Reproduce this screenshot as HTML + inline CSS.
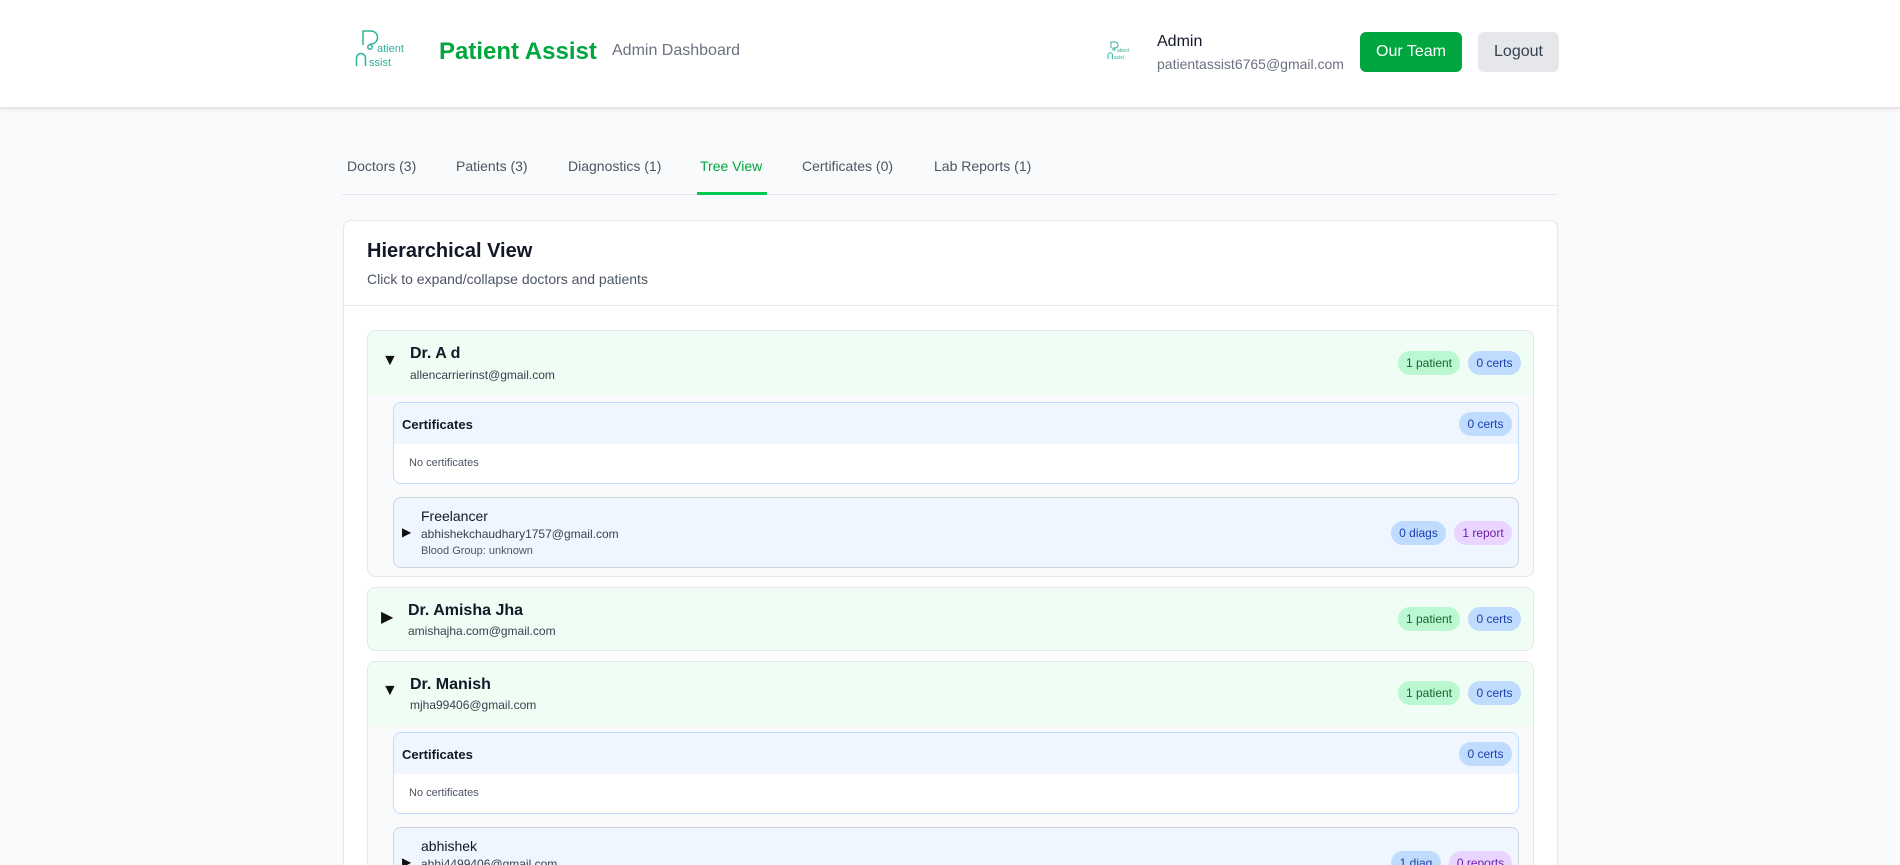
<!DOCTYPE html>
<html><head><meta charset="utf-8"><style>
*{box-sizing:border-box;margin:0;padding:0}
html,body{width:1900px;height:865px;overflow:hidden}
body{background:#f9fafb;font-family:"Liberation Sans",Arial,sans-serif;color:#111827}
#w{position:relative;width:1900px;height:865px;overflow:hidden}
.a{position:absolute;white-space:nowrap}
.hdr{position:absolute;left:0;top:0;width:1900px;height:108px;background:#fff;box-shadow:0 1px 3px rgba(0,0,0,.12);border-bottom:1px solid #e5e7eb}
.btn{position:absolute;border-radius:6px;font-size:16px;display:flex;align-items:center;justify-content:center}
.tab{position:absolute;top:158px;font-size:14px;color:#4b5563;white-space:nowrap}
.badge{position:absolute;height:24px;border-radius:12px;font-size:12px;display:flex;align-items:center;justify-content:center}
.g{background:#bbf7d0;color:#166534}.b{background:#bfdbfe;color:#1e40af}.p{background:#e9d5ff;color:#6b21a8}
.box{position:absolute;border-radius:8px}
.tri{position:absolute;font-size:16px;color:#111}
</style></head><body><div id="w">
<div class="hdr"></div>
<svg class="a" style="left:355px;top:30px" width="60" height="40" viewBox="0 0 60 40" fill="none" stroke="#2bb39a" stroke-width="1.5">
<path d="M8 15 V1 h8 a6.5 6.5 0 0 1 0 13 h-1"/><circle cx="15" cy="17" r="2.2"/><path d="M1.5 36 v-8 a4.5 4.5 0 0 1 9 0 v8"/>
<text x="22" y="22" font-size="11" fill="#2bb39a" stroke="none" font-family="Liberation Sans">atient</text>
<text x="14" y="36" font-size="11" fill="#2bb39a" stroke="none" font-family="Liberation Sans">ssist</text></svg>
<div class="a" style="left:439px;top:38px;font-size:24px;font-weight:bold;color:#00a63e">Patient Assist</div>
<div class="a" style="left:612px;top:42px;font-size:16px;color:#6b7280">Admin Dashboard</div>
<svg class="a" style="left:1107px;top:41px" width="30" height="20" viewBox="0 0 30 20" fill="none" stroke="#2bb39a" stroke-width="1">
<path d="M4 7 V1 h4 a3 3 0 0 1 0 6 h-1"/><circle cx="7" cy="8" r="1.1"/><path d="M1 18 v-4 a2.2 2.2 0 0 1 4.4 0 v4"/>
<text x="10" y="11" font-size="5" fill="#2bb39a" stroke="none">atient</text><text x="7" y="18" font-size="5" fill="#2bb39a" stroke="none">ssist</text></svg>
<div class="a" style="left:1157px;top:33px;font-size:16px;color:#111827">Admin</div>
<div class="a" style="left:1157px;top:56px;font-size:14px;color:#6b7280">patientassist6765@gmail.com</div>
<div class="btn" style="left:1360px;top:32px;width:102px;height:40px;background:#00a63e;color:#fff">Our Team</div>
<div class="btn" style="left:1478px;top:32px;width:81px;height:40px;background:#e5e7eb;color:#374151">Logout</div>

<div class="tab" style="left:347px">Doctors (3)</div>
<div class="tab" style="left:456px">Patients (3)</div>
<div class="tab" style="left:568px">Diagnostics (1)</div>
<div class="tab" style="left:700px;color:#00a63e">Tree View</div>
<div class="tab" style="left:802px">Certificates (0)</div>
<div class="tab" style="left:934px">Lab Reports (1)</div>
<div class="a" style="left:342px;top:194px;width:1216px;height:1px;background:#e5e7eb"></div>
<div class="a" style="left:697px;top:192px;width:70px;height:3px;background:#00c950"></div>

<div class="box" style="left:343px;top:220px;width:1215px;height:700px;background:#fff;border:1px solid #e5e7eb;box-shadow:0 1px 2px rgba(0,0,0,.05)"></div>
<div class="a" style="left:367px;top:240px;font-size:20px;font-weight:bold">Hierarchical View</div>
<div class="a" style="left:367px;top:271px;font-size:14px;color:#4b5563">Click to expand/collapse doctors and patients</div>
<div class="a" style="left:344px;top:305px;width:1213px;height:1px;background:#e5e7eb"></div>

<div class="box" style="left:367px;top:330px;width:1167px;height:247px;background:#f9fafb;border:1px solid #e5e7eb;overflow:hidden"><div style="height:64px;background:#f0fdf4"></div></div>
<div class="tri" style="left:382px;top:352px">▼</div>
<div class="a" style="left:410px;top:345px;font-size:16px;font-weight:bold">Dr. A d</div>
<div class="a" style="left:410px;top:368px;font-size:12px;color:#374151">allencarrierinst@gmail.com</div>
<div class="badge g" style="left:1398px;top:351px;width:62px">1 patient</div>
<div class="badge b" style="left:1468px;top:351px;width:53px">0 certs</div>

<div class="box" style="left:393px;top:402px;width:1126px;height:82px;background:#fff;border:1px solid #bfdbfe;overflow:hidden"><div style="height:41px;background:#eff6ff"></div></div>
<div class="a" style="left:402px;top:417px;font-size:13px;font-weight:bold">Certificates</div>
<div class="badge b" style="left:1459px;top:412px;width:53px">0 certs</div>
<div class="a" style="left:409px;top:457px;font-size:11px;color:#4b5563">No certificates</div>

<div class="box" style="left:393px;top:497px;width:1126px;height:71px;background:#eff6ff;border:1px solid #d1d5db"></div>
<div class="tri" style="left:402px;top:525px;font-size:12px">▶</div>
<div class="a" style="left:421px;top:508px;font-size:14px">Freelancer</div>
<div class="a" style="left:421px;top:527px;font-size:12px;color:#374151">abhishekchaudhary1757@gmail.com</div>
<div class="a" style="left:421px;top:545px;font-size:11px;color:#4b5563">Blood Group: unknown</div>
<div class="badge b" style="left:1391px;top:521px;width:55px">0 diags</div>
<div class="badge p" style="left:1454px;top:521px;width:58px">1 report</div>

<div class="box" style="left:367px;top:587px;width:1167px;height:64px;background:#f0fdf4;border:1px solid #e5e7eb"></div>
<div class="tri" style="left:381px;top:607px">▶</div>
<div class="a" style="left:408px;top:602px;font-size:16px;font-weight:bold">Dr. Amisha Jha</div>
<div class="a" style="left:408px;top:624px;font-size:12px;color:#374151">amishajha.com@gmail.com</div>
<div class="badge g" style="left:1398px;top:607px;width:62px">1 patient</div>
<div class="badge b" style="left:1468px;top:607px;width:53px">0 certs</div>

<div class="box" style="left:367px;top:661px;width:1167px;height:300px;background:#f9fafb;border:1px solid #e5e7eb;overflow:hidden"><div style="height:64px;background:#f0fdf4"></div></div>
<div class="tri" style="left:382px;top:682px">▼</div>
<div class="a" style="left:410px;top:676px;font-size:16px;font-weight:bold">Dr. Manish</div>
<div class="a" style="left:410px;top:698px;font-size:12px;color:#374151">mjha99406@gmail.com</div>
<div class="badge g" style="left:1398px;top:681px;width:62px">1 patient</div>
<div class="badge b" style="left:1468px;top:681px;width:53px">0 certs</div>

<div class="box" style="left:393px;top:732px;width:1126px;height:82px;background:#fff;border:1px solid #bfdbfe;overflow:hidden"><div style="height:41px;background:#eff6ff"></div></div>
<div class="a" style="left:402px;top:747px;font-size:13px;font-weight:bold">Certificates</div>
<div class="badge b" style="left:1459px;top:742px;width:53px">0 certs</div>
<div class="a" style="left:409px;top:787px;font-size:11px;color:#4b5563">No certificates</div>

<div class="box" style="left:393px;top:827px;width:1126px;height:71px;background:#eff6ff;border:1px solid #d1d5db"></div>
<div class="tri" style="left:402px;top:855px;font-size:12px">▶</div>
<div class="a" style="left:421px;top:838px;font-size:14px">abhishek</div>
<div class="a" style="left:421px;top:857px;font-size:12px;color:#374151">abhi4499406@gmail.com</div>
<div class="badge b" style="left:1391px;top:851px;width:50px">1 diag</div>
<div class="badge p" style="left:1449px;top:851px;width:63px">0 reports</div>
</div></body></html>
